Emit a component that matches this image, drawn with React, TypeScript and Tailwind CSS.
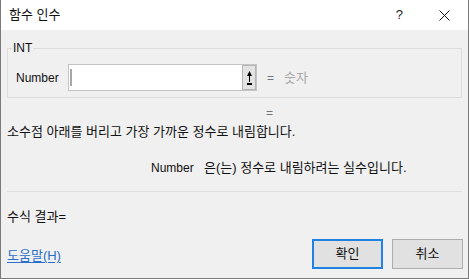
const font = { fontFamily: '"Liberation Sans", "Noto Sans CJK KR", sans-serif' };

function CloseIcon() {
  return (
    <svg width="11" height="11" viewBox="0 0 11 11" className="block">
      <path d="M0.5 0.5 L10.5 10.5 M10.5 0.5 L0.5 10.5" stroke="#111" strokeWidth="1" fill="none" />
    </svg>
  );
}

function RefIcon() {
  return (
    <svg width="7" height="16" viewBox="0 0 7 16" className="block">
      <path d="M3.5 1 L6 6 L1 6 Z" fill="#000" />
      <rect x="3" y="5" width="1" height="7" fill="#000" />
      <rect x="1" y="13" width="5" height="2" fill="#000" />
    </svg>
  );
}

export default function App() {
  return (
    <div
      style={font}
      className="w-[469px] h-[279px] flex flex-col bg-[#f0f0f0] border-x border-b border-[#7a7a7a] text-[12px] text-[#111]"
    >
      {/* title bar */}
      <div className="h-[30px] shrink-0 bg-white flex items-center pl-[8px] pr-[18px]">
        <span className="text-[13px] leading-[16px]">함수 인수</span>
        <span className="ml-auto mr-[36px] text-[13px] leading-[16px] text-[#222]">?</span>
        <CloseIcon />
      </div>

      <div className="flex flex-col px-[6px]">
        <fieldset className="mt-[12px] border border-[#dcdcdc] pb-[6px]">
          <legend className="ml-[4px] px-[1px] leading-[12px]">INT</legend>
          <div className="mt-[10px] pl-[8px] flex items-center">
            <span className="w-[52px] leading-[16px]">Number</span>
            <div className="w-[189px] h-[27px] flex border border-[#c4c4c4] bg-white">
              <div className="flex-1 flex items-center pl-[1px]">
                <div className="w-[2px] h-[17px] bg-[#a6a6a6]" />
              </div>
              <div className="w-[14px] flex items-center justify-center bg-[#e3e3e3] border border-[#b5b5b5]">
                <RefIcon />
              </div>
            </div>
            <span className="ml-[10px] leading-[16px] text-[#6f7580]">=</span>
            <span className="ml-[10px] text-[13px] leading-[16px] text-[#a9a9a9]">숫자</span>
          </div>
        </fieldset>

        <div className="mt-[7px] pl-[259px] leading-[16px] text-[#6f7580]">=</div>
        <div className="mt-[3px] text-[13px] leading-[16px]">소수점 아래를 버리고 가장 가까운 정수로 내림합니다.</div>
        <div className="mt-[20px] pl-[144px] flex items-center leading-[16px]">
          <span className="w-[53px]">Number</span>
          <span className="text-[13px]">은(는) 정수로 내림하려는 실수입니다.</span>
        </div>

        <div className="mt-[15px] h-px bg-[#dedede]" />

        <div className="mt-[17px] text-[13px] leading-[16px]">수식 결과=</div>

        <div className="mt-[14px] flex items-end">
          <a href="#" className="mb-[5px] text-[13px] leading-[16px] text-[#2a6fc9] underline underline-offset-2">
            도움말(H)
          </a>
          <button className="ml-auto w-[71px] h-[30px] bg-[#e1e1e1] border-2 border-[#2083e3] text-[13px] leading-[16px]">
            확인
          </button>
          <button className="ml-[9px] mr-[-1px] w-[71px] h-[30px] bg-[#e1e1e1] border border-[#adadad] text-[13px] leading-[16px]">
            취소
          </button>
        </div>
      </div>
    </div>
  );
}
